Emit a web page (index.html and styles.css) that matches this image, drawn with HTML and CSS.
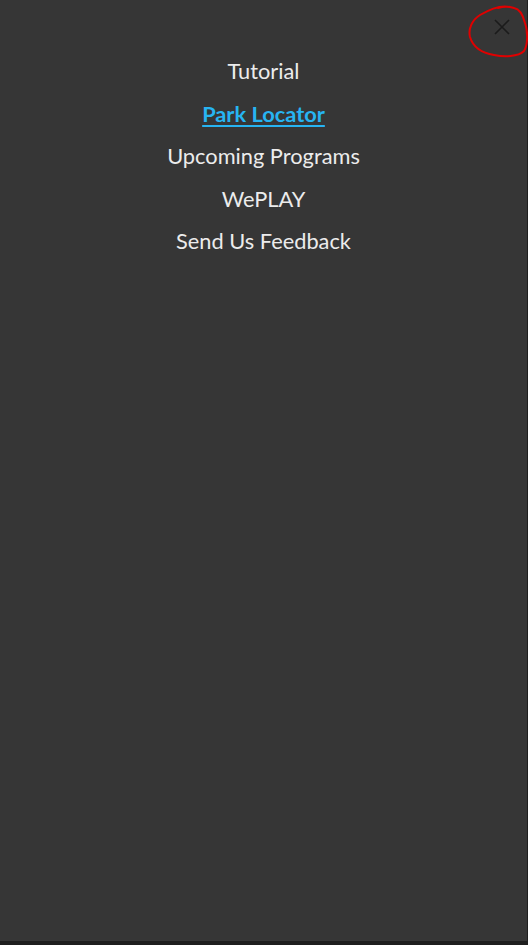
FILE: index.html
```html
<!DOCTYPE html>
<html lang="en">
<head>
<meta charset="utf-8">
<title>Menu</title>
<link rel="stylesheet" href="styles.css">
</head>
<body>
<div class="drawer">
  <button class="close" aria-label="Close">
    <svg viewBox="0 0 16 16" width="16" height="16"><path d="M1 1 L15 15 M15 1 L1 15" stroke="#1b1b1b" stroke-width="1.6" fill="none"/></svg>
  </button>
  <svg class="mark" viewBox="0 0 60 56" width="60" height="56"><path d="M42 4 C34 2 22 6 12 12 C4 17 0 26 2 34 C5 44 14 50 26 52 C36 54 50 54 56 48 C60 42 60 28 57 20 C55 12 52 6 46 5 C40 3 33 4 30 5" stroke="#e00000" stroke-width="2" fill="none" stroke-linecap="round"/></svg>
  <nav class="menu">
    <a class="item">Tutorial</a>
    <a class="item active">Park Locator</a>
    <a class="item">Upcoming Programs</a>
    <a class="item">WePLAY</a>
    <a class="item">Send Us Feedback</a>
  </nav>
</div>
</body>
</html>
```
FILE: styles.css
```css
html, body {
  margin: 0;
  padding: 0;
  background: #1e1e1e;
}
.drawer {
  position: relative;
  width: 527px;
  height: 941px;
  background: #363636;
  border-right: 1px solid #1f1f1f;
  font-family: Lato, "Noto Sans", sans-serif;
}
.close {
  position: absolute;
  top: 19px;
  right: 17px;
  width: 16px;
  height: 16px;
  padding: 0;
  border: 0;
  background: none;
  display: block;
}
.close svg { display: block; }
.mark {
  position: absolute;
  top: 3px;
  left: 468px;
}
.menu {
  display: flex;
  flex-direction: column;
  align-items: center;
  padding-top: 50px;
  gap: 0;
}
.item {
  color: #ececec;
  font-size: 21.8px;
  line-height: 42.5px;
  text-decoration: none;
}
.item.active {
  color: #27b4f2;
  font-weight: bold;
  text-decoration: underline;
  text-decoration-thickness: 2px;
  text-underline-offset: 3px;
}
```
